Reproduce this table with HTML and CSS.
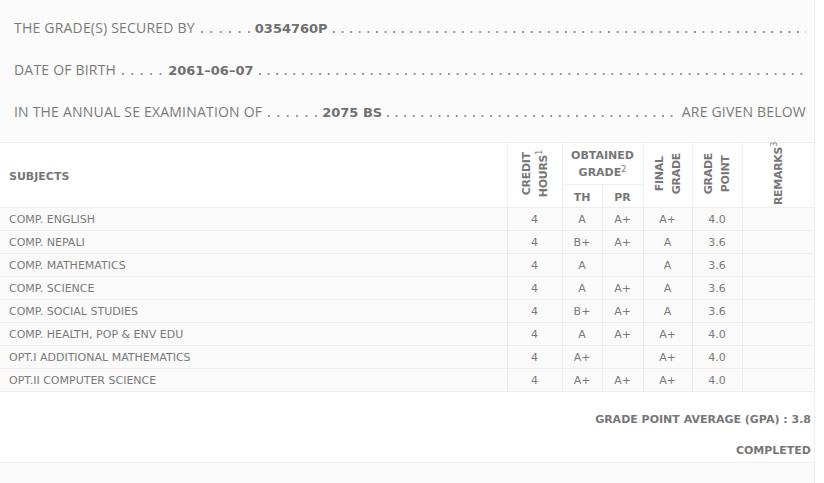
FILE: index.html
```html
<!DOCTYPE html>
<html>
<head>
<meta charset="utf-8">
<link rel="stylesheet" href="styles.css">
</head>
<body>
<div class="sheet">
  <div class="intro">
    <div class="line">
      <span class="lbl">THE GRADE(S) SECURED BY</span>
      <span class="dots d6"></span>
      <b class="val">0354760P</b>
      <span class="dots fill"></span>
    </div>
    <div class="line">
      <span class="lbl">DATE OF BIRTH</span>
      <span class="dots d5"></span>
      <b class="val">2061–06–07</b>
      <span class="dots fill"></span>
    </div>
    <div class="line">
      <span class="lbl">IN THE ANNUAL SE EXAMINATION OF</span>
      <span class="dots d6"></span>
      <b class="val">2075 BS</b>
      <span class="dots fill"></span>
      <span class="lbl tail">ARE GIVEN BELOW</span>
    </div>
  </div>

  <table class="grades">
    <colgroup>
      <col class="c-sub"><col class="c-cr"><col class="c-th"><col class="c-pr"><col class="c-fg"><col class="c-gp"><col class="c-rm">
    </colgroup>
    <thead>
      <tr class="h1">
        <th rowspan="2" class="subj">SUBJECTS</th>
        <th rowspan="2"><span class="vert">CREDIT<br>HOURS<sup>1</sup></span></th>
        <th colspan="2" class="og">OBTAINED<br>GRADE<sup>2</sup></th>
        <th rowspan="2"><span class="vert">FINAL<br>GRADE</span></th>
        <th rowspan="2"><span class="vert">GRADE<br>POINT</span></th>
        <th rowspan="2"><span class="vert">REMARKS<sup>3</sup></span></th>
      </tr>
      <tr class="h2">
        <th>TH</th>
        <th>PR</th>
      </tr>
    </thead>
    <tbody>
      <tr><td class="subj">COMP. ENGLISH</td><td>4</td><td>A</td><td>A+</td><td>A+</td><td>4.0</td><td></td></tr>
      <tr><td class="subj">COMP. NEPALI</td><td>4</td><td>B+</td><td>A+</td><td>A</td><td>3.6</td><td></td></tr>
      <tr><td class="subj">COMP. MATHEMATICS</td><td>4</td><td>A</td><td></td><td>A</td><td>3.6</td><td></td></tr>
      <tr><td class="subj">COMP. SCIENCE</td><td>4</td><td>A</td><td>A+</td><td>A</td><td>3.6</td><td></td></tr>
      <tr><td class="subj">COMP. SOCIAL STUDIES</td><td>4</td><td>B+</td><td>A+</td><td>A</td><td>3.6</td><td></td></tr>
      <tr><td class="subj">COMP. HEALTH, POP &amp; ENV EDU</td><td>4</td><td>A</td><td>A+</td><td>A+</td><td>4.0</td><td></td></tr>
      <tr><td class="subj">OPT.I ADDITIONAL MATHEMATICS</td><td>4</td><td>A+</td><td></td><td>A+</td><td>4.0</td><td></td></tr>
      <tr><td class="subj">OPT.II COMPUTER SCIENCE</td><td>4</td><td>A+</td><td>A+</td><td>A+</td><td>4.0</td><td></td></tr>
    </tbody>
  </table>

  <div class="summary">
    <div class="gpa">GRADE POINT AVERAGE (GPA) : 3.8</div>
    <div class="status">COMPLETED</div>
  </div>
  <div class="bottom"></div>
</div>
</body>
</html>
```
FILE: styles.css
```css
html, body {
  margin: 0;
  padding: 0;
  background: #ffffff;
}

.sheet {
  width: 814px;
  border-right: 1px solid #efefef;
  color: #777;
}

.intro {
  background: #fbfbfb;
  border-bottom: 1px solid #eeeeee;
  padding: 7px 8px 9px 14px;
  font-family: "Open Sans", "DejaVu Sans", sans-serif;
  font-size: 14px;
  letter-spacing: 0.2px;
  color: #7a7a7a;
}

.line {
  display: flex;
  align-items: baseline;
  height: 42px;
  line-height: 42px;
  white-space: nowrap;
}

.lbl {
  flex: none;
}

.dots {
  flex: none;
  align-self: stretch;
  margin-left: 6px;
  margin-right: 4px;
  background-image: linear-gradient(to right, #959595 2px, transparent 2px);
  background-size: 9.4px 2px;
  background-position: 0 24px;
  background-repeat: repeat-x;
}

.dots.d6 { width: 50px; }
.dots.d5 { width: 40px; margin-right: 6px; }

.dots.fill {
  flex: 1 1 auto;
  margin-left: 5px;
  margin-right: 0;
  background-size: 8.6px 2px;
}

.val {
  flex: none;
  font-family: "DejaVu Sans", Verdana, sans-serif;
  font-size: 13px;
  letter-spacing: 0;
  font-weight: 700;
  color: #707070;
}

.tail {
  margin-left: 4px;
}

.grades {
  width: 814px;
  border-collapse: collapse;
  table-layout: fixed;
  font-family: "DejaVu Sans", Verdana, sans-serif;
  font-size: 11px;
  color: #7a7a7a;
}

.c-sub { width: 507px; }
.c-cr { width: 55px; }
.c-th { width: 40px; }
.c-pr { width: 41px; }
.c-fg { width: 49px; }
.c-gp { width: 50px; }
.c-rm { width: 72px; }

.grades th,
.grades td {
  border: 1px solid #eeeeee;
  padding: 0;
  text-align: center;
  vertical-align: middle;
}

.grades thead tr.h1 th {
  border-top: 0;
}

.grades th:first-child,
.grades td:first-child {
  border-left: 0;
}

.grades tr.h1 th:last-child,
.grades td:last-child {
  border-right: 0;
}

.grades th {
  font-weight: 700;
  color: #777;
  background: #ffffff;
}

.grades tr.h1 {
  height: 41px;
}

.grades tr.h2 {
  height: 23px;
}

.grades tr.h2 th {
  padding-top: 3px;
}

.grades th.subj {
  text-align: left;
  padding-left: 9px;
  padding-top: 4px;
}

.grades th.og {
  line-height: 17px;
  padding-top: 1px;
}

.grades sup {
  font-size: 8px;
  font-weight: 400;
  line-height: 0;
  vertical-align: 4px;
}

.vert {
  display: inline-block;
  writing-mode: vertical-rl;
  transform: rotate(180deg);
  line-height: 17px;
  letter-spacing: -0.3px;
  text-align: center;
  margin: -8px 0;
}

.grades tbody tr {
  height: 23px;
  background: #fafafa;
}

.grades td {
  line-height: 21px;
  padding-top: 1px;
}

.grades td.subj {
  text-align: left;
  padding-left: 9px;
}

.summary {
  padding: 13px 3px 0 0;
  text-align: right;
  font-family: "DejaVu Sans", Verdana, sans-serif;
  font-size: 11px;
  font-weight: 700;
  color: #777;
  border-bottom: 1px solid #eeeeee;
}

.gpa {
  line-height: 30px;
  margin-bottom: 5px;
}

.status {
  line-height: 22px;
}

.bottom {
  height: 20px;
  background: #fafafa;
}
```
